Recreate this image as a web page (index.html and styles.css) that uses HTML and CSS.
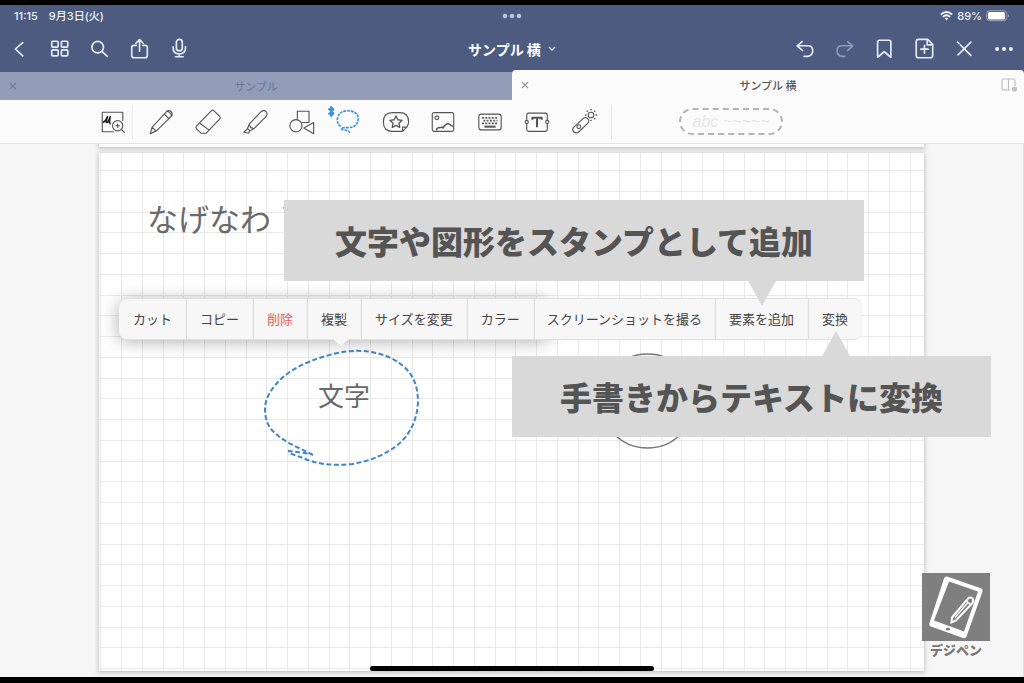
FILE: index.html
```html
<!DOCTYPE html>
<html lang="ja">
<head>
<meta charset="utf-8">
<meta name="viewport" content="width=device-width, initial-scale=1">
<title>サンプル 横</title>
<link rel="stylesheet" href="styles.css">
</head>
<body>
<header class="header">
  <div class="status">
    <div class="status-left"><span>11:15</span><span>9月3日(火)</span></div>
    <svg class="dots" width="22" height="6" viewBox="0 0 22 6" fill="#b4c4e8"><circle cx="4" cy="3" r="2.3"/><circle cx="11" cy="3" r="2.3"/><circle cx="18" cy="3" r="2.3"/></svg>
    <div class="status-right">
      <svg width="13" height="10" viewBox="0 0 13 10" fill="none" stroke="#f4f6fb" stroke-width="1.9"><path d="M.8 3.6Q6.5-1.4 12.2 3.6M2.9 5.9Q6.5 2.8 10.1 5.9"/><path d="M4.6 7.3Q6.5 5.9 8.4 7.3L6.5 9.5Z" fill="#f4f6fb" stroke="none"/></svg>
      <span>89%</span>
      <svg width="24" height="12" viewBox="0 0 24 12"><rect x=".7" y=".7" width="20" height="10" rx="3" fill="none" stroke="#98a3bf"/><rect x="2" y="2" width="17" height="7.5" rx="1.5" fill="#fff"/><path d="M22 4v3.6q2-1.8 0-3.6" fill="#98a3bf"/></svg>
    </div>
  </div>
  <nav class="nav">
    <div class="nav-group">
      <button class="nav-btn" aria-label="戻る"><svg viewBox="0 0 24 24"><path d="M15 5L7 12l8 7.500"/></svg></button>
      <button class="nav-btn" aria-label="一覧"><svg viewBox="0 0 24 24"><rect x="3" y="3.500" width="7" height="6.500" rx="1.200"/><rect x="13.500" y="3.500" width="7" height="6.500" rx="1.200"/><rect x="3" y="13" width="7" height="6.500" rx="1.200"/><rect x="13.500" y="13" width="7" height="6.500" rx="1.200"/></svg></button>
      <button class="nav-btn" aria-label="検索"><svg viewBox="0 0 24 24"><circle cx="9.500" cy="10" r="6.300"/><path d="M14 14.500l6 5.500"/></svg></button>
      <button class="nav-btn" aria-label="共有"><svg viewBox="0 0 24 24"><path d="M8 8H5.500Q3 8 3 10.500V19q0 2.500 2.500 2.500h12q2.500 0 2.500-2.500v-8.500Q20 8 17.500 8H15M11.500 14.500V2M7.500 5.700l4-3.900 4 3.900"/></svg></button>
      <button class="nav-btn" aria-label="録音"><svg viewBox="0 0 24 24"><rect x="8" y="1.500" width="6.500" height="12.500" rx="3.200"/><path d="M4.500 9.500V11q0 6.500 6.700 6.500T18 11V9.500M11.200 17.500v3M7 20.500h8.500"/></svg></button>
    </div>
    <button class="title">サンプル 横<svg width="8" height="6" viewBox="0 0 8 6" fill="none" stroke="#dfe4f2" stroke-width="1.300"><path d="M1 1l3 3 3-3"/></svg></button>
    <div class="nav-group nav-end">
      <button class="nav-btn" aria-label="取り消す"><svg viewBox="0 0 24 24"><path d="M10 4L4.500 8.500l5.800 5M4.500 8.500H16q5.500 0 5.500 5.500T16 20h-4"/></svg></button>
      <button class="nav-btn dim" aria-label="やり直す"><svg viewBox="0 0 24 24"><path d="M16 4L21.500 8.500 16 13.500M21.500 8.500H10q-5.500 0-5.500 5.500T10 20h3"/></svg></button>
      <button class="nav-btn" aria-label="ブックマーク"><svg viewBox="0 0 24 24"><path d="M5 21V4.500q0-2 2-2h10.500q2 0 2 2V21l-7.300-6z"/></svg></button>
      <button class="nav-btn" aria-label="ページを追加"><svg viewBox="0 0 24 24"><path d="M6 1.500H16L21.500 7V19q0 2.500-2.500 2.500H6q-2.500 0-2.500-2.500V4Q3.500 1.500 6 1.500zM15.500 2v5.500H21M12.500 8v8.500M8.500 12.200h8"/></svg></button>
      <button class="nav-btn" aria-label="閉じる"><svg viewBox="0 0 24 24"><path d="M5.500 18.500L19.500 4.500M8 7.500L19.500 19M5 4.500l1.500 1.500"/></svg></button>
      <button class="nav-btn" aria-label="その他"><svg viewBox="0 0 24 24"><g fill="#eef2fb" stroke="none"><circle cx="4.500" cy="12" r="2.200"/><circle cx="12" cy="12" r="2.200"/><circle cx="19.500" cy="12" r="2.200"/></g></svg></button>
    </div>
  </nav>
  <div class="tabs">
    <div class="tab"><button class="tab-x" aria-label="タブを閉じる"><svg width="8" height="8" viewBox="0 0 8 8"><path d="M1 1l6 6M7 1L1 7"/></svg></button><span>サンプル</span></div>
    <div class="tab active"><button class="tab-x" aria-label="タブを閉じる"><svg width="8" height="8" viewBox="0 0 8 8"><path d="M1 1l6 6M7 1L1 7"/></svg></button><span>サンプル 横</span>
      <button class="split" aria-label="分割"><svg width="18" height="16" viewBox="0 0 18 16" fill="none" stroke="#bcbcbc" stroke-width="1.100"><path d="M10 13H4Q2 13 2 11V4q0-2 2-2h9q2 0 2 2v5M8.500 2v11"/><circle cx="14.500" cy="12" r="2" fill="#c4c4c4"/></svg></button></div>
  </div>
</header>
<div class="tools">
  <button class="tool first" aria-label="ズーム"><svg viewBox="0 0 30 30"><path d="M16 25.500H3.500v-21h22V14"/><path d="M4 15.500q3-1 5-6-2 6-.5 6 1.500 0 3.500-6-1.500 7 .5 7.500" stroke="#222" stroke-width="1.800"/><circle cx="20" cy="19" r="5.500"/><path d="M24 23l3.500 3.500M17.500 19h5M20 16.500v5"/></svg></button>
  <button class="tool" aria-label="ペン"><svg viewBox="0 0 30 30"><path d="M3.500 27.500l2-7L21 4q2.500-2.500 5 0 2 2.500 0 5L10 24.500zM5.500 20.500l4 4M18.500 6.500l5 5M20.500 4.500l-4.500 4.500M20.500 3.500q4 0 6 4.500L22 13"/></svg></button>
  <button class="tool" aria-label="消しゴム"><svg viewBox="0 0 30 30"><path d="M2.500 19.500L18.500 3q1.500-1.300 3 0l6 6q1.300 1.500 0 3L13 27H7.500l-5-5q-1-1 0-2.500zM6 16l10.500 8"/></svg></button>
  <button class="tool" aria-label="蛍光ペン"><svg viewBox="0 0 30 30"><path d="M9 17L21.500 4q3-2.500 5.500 0 2 2.500 0 5L14 22q-5 0-5-5zM9 17l-2 5 2.500 2.500 4.500-2.500M7 22l-4 4 5 1 1.500-2.500"/></svg></button>
  <button class="tool" aria-label="図形"><svg viewBox="0 0 30 30"><circle cx="8.500" cy="19" r="6.500"/><path d="M10 12.500V3.500h12.500v12H15M27.500 15.500v12L17 21.500z"/></svg></button>
  <button class="tool" aria-label="投げ縄"><svg viewBox="0 0 30 30"><path d="M6 20Q1 15 3 10 5 3 13 3q11 0 12 8-.500 10-11 10-5.500 0-7 .500-.500 2 3 2 4 0 6 3" stroke="#3b8fdc" stroke-width="1.700" stroke-dasharray="3 1"/></svg><svg class="bt" viewBox="0 0 8 12"><path d="M1.500 3l5 5L4 10.500v-9L6.500 4l-5 5" stroke="#3b8fdc" stroke-width="1.800"/></svg></button>
  <button class="tool" aria-label="要素"><svg viewBox="0 0 30 30"><path d="M22 25H11Q1.500 25 1.500 15T11 5h8q9.500 0 9.500 10 0 3-2 5.500zM22 25v-4.500h4.500"/><path d="M15 8.500l2 4.100 4.500.6-3.300 3.100.8 4.500-4-2.200-4 2.200.8-4.500-3.300-3.100 4.500-.6z" stroke-width="1.400"/></svg></button>
  <button class="tool" aria-label="画像"><svg viewBox="0 0 30 30"><rect x="3.500" y="5" width="23" height="20" rx="2"/><circle cx="8.500" cy="10.500" r="2"/><path d="M8 24q0-3 4-3 2-1 3 .500 3-5 6-4.500l5 3" stroke-width="1.600"/></svg></button>
  <button class="tool" aria-label="キーボード"><svg viewBox="0 0 30 30"><rect x="3" y="6.500" width="24" height="17" rx="2.500"/><path d="M6.500 10.500h17M8 13.500h15M6.500 16.500h17" stroke-dasharray="2 1.500" stroke-width="1.900"/><path d="M9 20h12" stroke-width="2.200"/></svg></button>
  <button class="tool" aria-label="テキスト"><svg viewBox="0 0 30 30"><path d="M4 13V7.500q0-2 2-2h18q2 0 2 2V13M4 17v6q0 2 2 2h18q2 0 2-2v-6"/><circle cx="4" cy="15" r="1.700"/><circle cx="26" cy="15" r="1.700"/><path d="M10 12.500v-2h10v2M15 10.500v10" stroke-width="2.200"/></svg></button>
  <button class="tool" aria-label="レーザー"><svg viewBox="0 0 30 30"><path d="M3.500 21L15 10.500q2-1 4 1t1 4L9 26q-2.500 1.500-5-.500-2-2-.500-4.500z"/><circle cx="9.500" cy="20" r="2"/><circle cx="22.500" cy="7.500" r="3"/><path d="M22.500 1v1.500M22.500 12.500V14M16 7.500h1.500M27.500 7.500H29M18 3l1 1M26 11l1 1M27 3l-1 1" stroke-width="1.600"/></svg></button>
  <div class="lasso-style"><span>abc ~~~~~</span></div>
</div>
<main class="canvas">
  <div class="paper prev"></div>
  <div class="paper">
    <svg class="grid" width="100%" height="100%"><defs><pattern id="g" x="22" y="17" width="83" height="83" patternUnits="userSpaceOnUse"><path d="M0 .5H83M0 21.500H83M0 42.500H83M0 62.500H83M.5 0V83M21.500 0V83M42.500 0V83M62.500 0V83" stroke="#e9e9e9" fill="none"/></pattern></defs><rect width="100%" height="100%" fill="url(#g)"/></svg>
  </div>
  <svg class="ink" width="600" height="340" viewBox="100 144 600 340" fill="none">
    <path d="M284 207l1 4" stroke="#666" stroke-width="1.500"/>
    <circle cx="647.500" cy="401" r="47" stroke="#777" stroke-width="1.500"/>
    <path d="M313 455L299 448Q282 440 275 433 265 425 265 409 265 394 282 378 298 364 326 356 345 350 363 351 388 353 403 366 418 378 418 402 417 425 402 441 383 459 352 464 322 467 303 458L289 453 289 451 312 454" stroke="#3f86c8" stroke-width="2" stroke-dasharray="5 2.500"/>
  </svg>
  <span class="hand hand-title">なげなわ</span>
  <span class="hand hand-word">文字</span>
  <div class="menu">
    <button>カット</button><button>コピー</button><button class="danger">削除</button><button>複製</button><button>サイズを変更</button><button>カラー</button><button class="tight">スクリーンショットを撮る</button><button>要素を追加</button><button>変換</button>
  </div>
  <div class="callout callout-add">文字や図形をスタンプとして追加</div>
  <div class="callout callout-convert">手書きからテキストに変換</div>
  <div class="brand">
    <svg width="68" height="68" viewBox="0 0 68 68"><rect width="68" height="68" fill="#7f7f7f"/><path d="M25 3.500L59.500 15.500Q61 16.500 60.500 18.500L44.500 63.500Q43.500 66 41 65L9 53.500Q6.500 52.500 7.500 50L22 5.500Q23 3 25 3.500zM27 8.500L12 47.500 42 58.500 56 18.500z" fill="#fff" fill-rule="evenodd"/><ellipse cx="26" cy="56" rx="2.200" ry="1.500" fill="#7f7f7f"/><path d="M29.500 49.500L30 44.500 46 25.500Q48.500 23.500 50.500 25.500 52 27.500 50.500 30L34 47.500z" fill="none" stroke="#fff" stroke-width="2"/><path d="M33 44.500L46 29.500M44.500 28l4 3.500" stroke="#fff" stroke-width="1.200"/></svg>
    <span>デジペン</span>
  </div>
  <div class="home"></div>
</main>
</body>
</html>
```
FILE: styles.css
```css
* { box-sizing: border-box; }
body {
  margin: 0;
  min-height: 100vh;
  display: flex;
  flex-direction: column;
  background: #f6f6f6;
  border-top: 5px solid #000;
  border-bottom: 6px solid #000;
  font-family: "Liberation Sans", "Noto Sans CJK JP", sans-serif;
  color: #444;
}
button {
  border: 0;
  padding: 0;
  margin: 0;
  background: none;
  color: inherit;
  font: inherit;
}
svg { display: block; flex: none; }
.header { background: #4d5b80; }
.status {
  display: grid;
  grid-template-columns: 1fr auto 1fr;
  align-items: center;
  height: 22px;
  padding: 0 14px;
  color: #eef1f8;
  font: 500 11px/22px Inter, "Noto Sans CJK JP", sans-serif;
}
.status-left { display: flex; gap: 11px; }
.status-right { display: flex; gap: 4px; align-items: center; justify-content: flex-end; }
.nav {
  display: grid;
  grid-template-columns: 1fr auto 1fr;
  align-items: center;
  height: 43px;
}
.nav-group { display: flex; }
.nav-end { justify-content: flex-end; }
.nav-btn { width: 40px; height: 40px; display: grid; place-items: center; }
.nav-btn svg {
  width: 22px;
  height: 22px;
  fill: none;
  stroke: #e6ebf8;
  stroke-width: 1.8;
  stroke-linecap: round;
  stroke-linejoin: round;
}
.dim { opacity: .45; }
.title {
  display: flex;
  align-items: center;
  gap: 7px;
  color: #fff;
  font: 700 14px/20px "Noto Sans CJK JP", sans-serif;
}
.tabs { display: grid; grid-template-columns: 1fr 1fr; height: 30px; align-items: end; }
.tab {
  position: relative;
  display: flex;
  align-items: center;
  justify-content: center;
  height: 28px;
  background: #949db8;
  color: #737b94;
  font: 500 11px/16px "Noto Sans CJK JP", sans-serif;
}
.tab.active { height: 30px; background: #fbfbfb; color: #555; border-radius: 4px 4px 0 0; }
.tab-x { position: absolute; left: 9px; }
.tab-x svg { fill: none; stroke: #747b8f; stroke-width: 1.2; }
.active .tab-x svg { stroke: #999; }
.split { position: absolute; right: 6px; }
.tools {
  display: flex;
  align-items: center;
  height: 44px;
  padding-left: 90px;
  background: #fbfbfb;
  border-bottom: 1px solid #e3e3e3;
}
.tool { position: relative; width: 47px; height: 34px; display: grid; place-items: center; }
.tool svg { width: 28px; height: 28px; fill: none; stroke: #555; stroke-width: 1.2; stroke-linejoin: round; }
.tool.first { border-right: 1px solid #ececec; width: 43px; margin-right: 4px; padding-left: 4px; }
.tool .bt { position: absolute; left: 2px; top: 0; width: 8px; height: 13px; }
.lasso-style {
  display: flex;
  align-items: center;
  height: 34px;
  margin-left: 4px;
  padding-left: 67px;
  border-left: 1px solid #e8e8e8;
}
.lasso-style span {
  width: 104px;
  border: 2px dashed #b4b4b4;
  border-radius: 14px;
  color: #e6e6e6;
  font: italic 16px/23px "Liberation Sans", sans-serif;
  text-align: center;
  white-space: nowrap;
}
.canvas { position: relative; flex: 1; min-height: 533px; overflow: hidden; border-right: 1px solid #ddd; }
.paper {
  position: absolute;
  top: 9px;
  bottom: 6px;
  left: 99px;
  right: 99px;
  background: #fff;
  box-shadow: 0 1px 4px 1px #c4c4c4;
}
.paper.prev { top: -10px; bottom: auto; height: 13px; }
.ink { position: absolute; left: 100px; top: 0; }
.hand { position: absolute; color: #6a6a6a; font-family: "Noto Sans CJK JP", sans-serif; font-weight: 400; white-space: nowrap; }
.hand-title { left: 147px; top: 54px; font-size: 31px; line-height: 40px; }
.hand-word { left: 318px; top: 231px; font-size: 26px; line-height: 40px; }
.menu {
  position: absolute;
  z-index: 1;
  left: 119px;
  top: 155px;
  display: flex;
  height: 40px;
}
.menu::before {
  content: "";
  position: absolute;
  z-index: -1;
  left: 0;
  top: 0;
  width: 430px;
  height: 40px;
  border-radius: 8px;
  box-shadow: 0 2px 18px #0005;
}
.menu::after {
  content: "";
  position: absolute;
  left: 214px;
  top: 40px;
  border: 8px solid transparent;
  border-top: 7px solid #f7f7f7;
  border-bottom: 0;
}
.menu button {
  padding: 0 14px 0 13px;
  border-left: 1px solid #dedede;
  background: #f7f7f7;
  box-shadow: 0 1px 1px #e0e0e0, 0 -1px 1px #e0e0e0;
  color: #444;
  font: 400 13px/38px "Noto Sans CJK JP", sans-serif;
  white-space: nowrap;
}
.menu button:first-child { border-color: #f7f7f7; border-radius: 8px 0 0 8px; }
.menu button:last-child { border-radius: 0 8px 8px 0; }
.menu .tight { padding: 0 13px 0 12px; }
.menu .danger { color: #e0625c; }
.callout {
  position: absolute;
  z-index: 2;
  background: #d9d9d9;
  color: #545454;
  font: 900 32px/81px "Noto Sans CJK JP", sans-serif;
  white-space: nowrap;
}
.callout::after { content: ""; position: absolute; border: 14px solid transparent; }
.callout-add { left: 284px; top: 56px; padding: 0 51px; }
.callout-add::after { left: 464px; top: 100%; border-top: 25px solid #d9d9d9; border-bottom: 0; }
.callout-convert { left: 512px; top: 212px; padding: 0 48px; }
.callout-convert::after { left: 310px; bottom: 100%; border-bottom: 25px solid #d9d9d9; border-top: 0; }
.brand {
  position: absolute;
  right: 33px;
  bottom: 18px;
  display: flex;
  flex-direction: column;
  align-items: center;
  color: #777;
  font: 900 13px/18px "Noto Sans CJK JP", sans-serif;
}
.home {
  position: absolute;
  left: 50%;
  bottom: 6px;
  width: 284px;
  height: 5px;
  margin-left: -142px;
  border-radius: 3px;
  background: #000;
}
```
